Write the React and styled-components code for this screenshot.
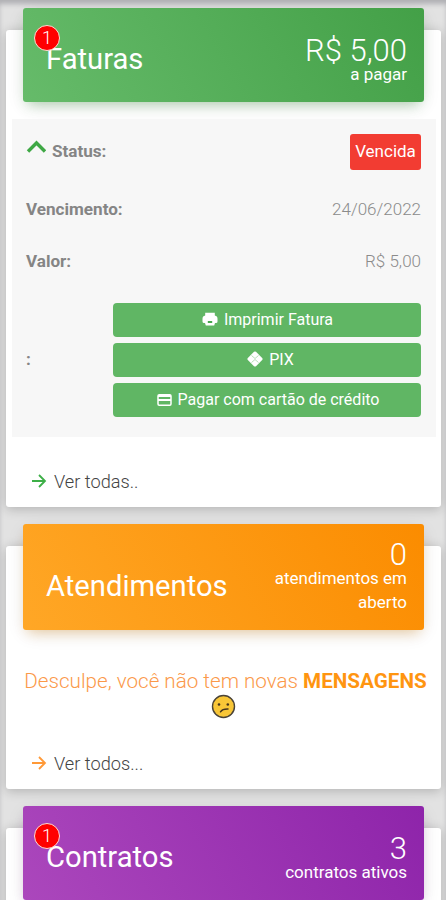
import React from 'react';
import styled, { createGlobalStyle } from 'styled-components';

const GlobalStyle = createGlobalStyle`
  * {
    box-sizing: border-box;
  }

  body {
    margin: 0;
    height: 900px;
    overflow: hidden;
    background: #e2e2e2;
    font-family: Roboto, 'Liberation Sans', sans-serif;
    font-weight: 300;
  }
`;

const Page = styled.main`
  height: 900px;
  overflow: hidden;
  padding: 30px 5px 0 6px;
  display: flex;
  flex-direction: column;
  gap: 39px;
  box-shadow: inset 0 5px 5px -1px #b0b0b4;
`;

const Card = styled.section`
  flex: none;
  height: ${props => props.height}px;
  padding: 0 5px 0 6px;
  border-radius: 3px;
  background: #fff;
  box-shadow: 0 2px 12px rgba(0, 0, 0, .22);
`;

const Banner = styled.header`
  height: ${props => props.height}px;
  margin: -22px 12px 0 11px;
  padding: ${props => props.top}px 17px 0 23px;
  display: flex;
  justify-content: space-between;
  border-radius: 3px;
  color: #fff;
  background: linear-gradient(60deg, ${props => props.from}, ${props => props.to});
  box-shadow: 0 5px 18px -3px rgba(0, 0, 0, .14), 0 7px 12px -5px ${props => props.glow};
`;

const TitleBox = styled.div`
  position: relative;
  padding-top: ${props => props.top}px;
`;

const Title = styled.h2`
  margin: 0;
  font-size: 29.2px;
  line-height: 34px;
  font-weight: 400;
`;

const Count = styled.span`
  position: absolute;
  left: -12px;
  top: -13px;
  width: 26px;
  height: 26px;
  border: 1.5px solid #ffdcd2;
  border-radius: 50%;
  background: #f00;
  font-size: 18px;
  line-height: 24px;
  text-align: center;
`;

const Summary = styled.div`
  width: 150px;
  text-align: right;
  font-size: 17px;
  line-height: 24px;
  font-weight: 400;
`;

const Amount = styled.div`
  margin-bottom: -1px;
  font-size: 31px;
  line-height: 25px;
  font-weight: 300;
  white-space: nowrap;
`;

const Details = styled.div`
  height: 318px;
  margin-top: 17px;
  padding: 15px 15px 0 14px;
  background: #f7f7f7;
`;

const Row = styled.div`
  height: ${props => props.height}px;
  display: flex;
  align-items: center;
  justify-content: space-between;
  font-size: 17px;
  color: #8b8b8b;
`;

const Label = styled.strong`
  display: flex;
  align-items: center;
  gap: 6px;
  padding-bottom: 2px;
  font-size: 17.1px;
  font-weight: 700;
  color: #858585;

  svg {
    margin-top: -9px;
  }
`;

const Value = styled.span`
  padding-bottom: 2px;
`;

const Status = styled.span`
  width: 71px;
  height: 36px;
  border-radius: 3px;
  background: #f23c32;
  color: #fff;
  font-weight: 400;
  line-height: 34px;
  text-align: center;
`;

const Actions = styled.div`
  width: 308px;
  display: grid;
  gap: 6px;
`;

const Action = styled.button`
  height: 34.3px;
  padding: 0 0 1px ${props => props.$indent || 1}px;
  border: 0;
  border-radius: 4px;
  display: flex;
  align-items: center;
  justify-content: center;
  gap: 6px;
  background: #60b664;
  color: #fff;
  font: 400 16px Roboto, 'Liberation Sans', sans-serif;
`;

const More = styled.a`
  display: flex;
  align-items: center;
  gap: 7px;
  height: 24px;
  margin: ${props => props.top}px 0 0 19px;
  font-size: 18.2px;
  color: #444;
`;

const Message = styled.p`
  margin: 39px -1px 0 2px;
  color: #fb994a;
  font-size: 20.65px;
  line-height: 25px;
  text-align: center;
  white-space: nowrap;

  b {
    font-weight: 700;
    color: #ff9510;
  }
`;

const Face = styled.svg`
  display: block;
  width: 25px;
  height: 25px;
  margin: 0 auto -1px 199px;
`;

const Chevron = () => (
  <svg width="20" height="15" viewBox="0 0 20 15" fill="none">
    <path d="M2 12.5 10.5 4 19 12.5" stroke="#3fa845" strokeWidth="3.4" />
  </svg>
);

const Arrow = ({ color }) => (
  <svg width="16" height="16" viewBox="0 0 16 16" fill="none" stroke={color} strokeWidth="1.8">
    <path d="M1 8h13M8 2l6 6-6 6" />
  </svg>
);

const Printer = () => (
  <svg width="16" height="16" viewBox="0 0 16 16">
    <path d="M3.2 1.8h9.6v2.7q2.7.5 2.700 3.300v2.700q0 1.500-1.500 1.500H13l-.8 2.500H3.800L3 12H2Q.5 12 .5 10.500V7.800q0-2.800 2.700-3.300Z" fill="#fff" />
    <path d="M5.800 10h4.400v2H5.800z" fill="#45a94c" />
  </svg>
);

const Pix = () => (
  <svg width="16" height="16" viewBox="0 0 16 16">
    <path d="m7 .8q1-.8 2 0L15.2 7q.8 1 0 2L9 15.2q-1 .8-2 0L.8 9Q0 8 .8 7Z" fill="#fff" />
    <path d="m4.500 4.500 3.500 3 3.500-3M4.500 11.500l3.500-3 3.500 3" stroke="#a5d6a7" strokeWidth=".8" fill="none" />
  </svg>
);

const CreditCard = () => (
  <svg width="15" height="14" viewBox="0 0 15 14">
    <rect x="1" y="1.7" width="13" height="10.6" rx="1.200" fill="none" stroke="#fff" strokeWidth="1.5" />
    <path d="M1 2h13v2H1zM1 6h13v2H1z" fill="#fff" />
  </svg>
);

const SadFace = () => (
  <Face viewBox="0 0 25 25">
    <circle cx="12.5" cy="12.5" r="11" fill="#f8c637" stroke="#4b4438" strokeWidth="1.4" />
    <path d="M9.500 17.800q2-3 7.500-2.800" stroke="#46351c" strokeWidth="1.500" fill="none" strokeLinecap="round" />
    <circle cx="8" cy="10.500" r="1.300" fill="#46351c" />
    <circle cx="16.800" cy="10.500" r="1.300" fill="#46351c" />
  </Face>
);

export default function App() {
  return (
    <>
      <GlobalStyle />
      <Page>
        <Card height={477}>
          <Banner height={94} top={30} from="#66bb6a" to="#43a047" glow="rgba(76, 175, 80, .35)">
            <TitleBox top={4}>
              <Title>Faturas</Title>
              <Count>1</Count>
            </TitleBox>
            <Summary>
              <Amount>R$ 5,00</Amount>
              a pagar
            </Summary>
          </Banner>
          <Details>
            <Row height={36}>
              <Label><Chevron />Status:</Label>
              <Status>Vencida</Status>
            </Row>
            <Row height={80}>
              <Label>Vencimento:</Label>
              <Value>24/06/2022</Value>
            </Row>
            <Row height={24}>
              <Label>Valor:</Label>
              <Value>R$ 5,00</Value>
            </Row>
            <Row height={172}>
              <Label>:</Label>
              <Actions>
                <Action><Printer />Imprimir Fatura</Action>
                <Action $indent={7}><Pix />PIX</Action>
                <Action $indent={2}><CreditCard />Pagar com cartão de crédito</Action>
              </Actions>
            </Row>
          </Details>
          <More top={32}><Arrow color="#3daf47" />Ver todas..</More>
        </Card>

        <Card height={243}>
          <Banner height={106} top={18} from="#ffa726" to="#fb8c00" glow="rgba(255, 152, 0, .3)">
            <TitleBox top={27}>
              <Title>Atendimentos</Title>
            </TitleBox>
            <Summary>
              <Amount>0</Amount>
              atendimentos em aberto
            </Summary>
          </Banner>
          <Message>
            Desculpe, você não tem novas <b>MENSAGENS</b>
          </Message>
          <SadFace />
          <More top={33}><Arrow color="#ff9937" />Ver todos...</More>
        </Card>

        <Card height={200}>
          <Banner height={94} top={30} from="#ab47bc" to="#8e24aa" glow="rgba(156, 39, 176, .3)">
            <TitleBox top={4}>
              <Title>Contratos</Title>
              <Count>1</Count>
            </TitleBox>
            <Summary>
              <Amount>3</Amount>
              contratos ativos
            </Summary>
          </Banner>
        </Card>
      </Page>
    </>
  );
}
